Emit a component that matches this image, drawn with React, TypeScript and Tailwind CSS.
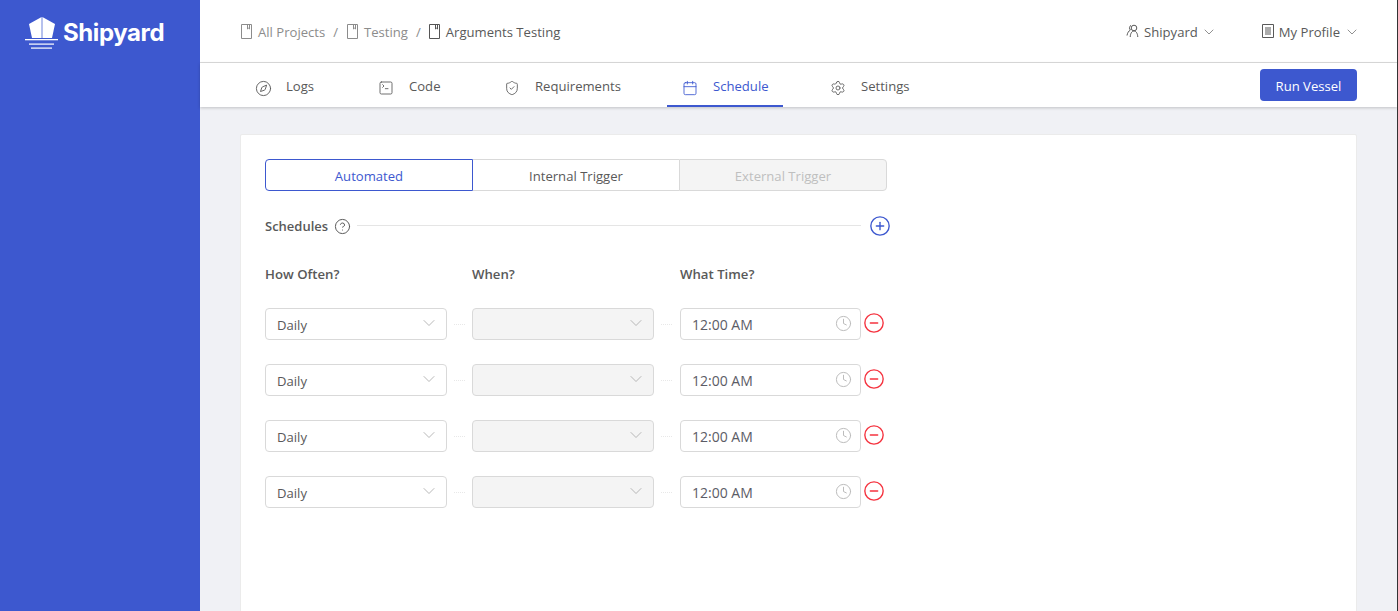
import React from "react";
import { ChevronDown, Compass, SquareTerminal, ShieldCheck, Calendar, Settings, Clock, CirclePlus, CircleMinus, CircleHelp } from "lucide-react";

const font = { fontFamily: '"Open Sans", sans-serif' };

function Doc({ className = "" }: { className?: string }) {
  return (
    <svg width="11" height="15" viewBox="0 0 11 15" fill="none" stroke="currentColor" strokeWidth="1" className={className}>
      <path d="M0.5 0.5h10v14h-10z" />
      <path d="M6.5 0.5v4.5l1-.8 1 .8v-4.5" />
    </svg>
  );
}

function Logo() {
  return (
    <svg width="34" height="34" viewBox="0 0 34 34" fill="white">
      <path d="M16.6 1 L4 8 L7 22 H16.6 Z" />
      <path d="M17.4 1 L30 8 L27 22 H17.4 Z" />
      <rect x="0" y="23" width="33" height="1.3" />
      <rect x="4" y="27.5" width="25" height="1.2" />
      <rect x="6" y="31.5" width="21" height="1.2" />
    </svg>
  );
}

function UserIcon() {
  return (
    <svg width="14" height="14" viewBox="0 0 14 14" fill="none" stroke="currentColor" strokeWidth="1" className="-mt-[3px]">
      <circle cx="8" cy="4" r="2.8" />
      <path d="M4.2 13c.2-3.5 1.6-6 3.8-6s3.6 2.5 3.8 6" />
      <path d="M5 1.4a2.8 2.8 0 0 0-.6 4.6C2.6 7 1.4 9 1 11.5" />
    </svg>
  );
}

function ProfileIcon() {
  return (
    <svg width="12" height="14" viewBox="0 0 12 14" fill="none" stroke="currentColor" strokeWidth="1" className="-mt-[3px]">
      <path d="M.5.5h11v13H.5z" />
      <path d="M3 4h6M3 6h6M3 8h6M3 10h6" />
    </svg>
  );
}

const tabs = [
  { label: "Logs", Icon: Compass, size: 17, w: "w-[91px]" },
  { label: "Code", Icon: SquareTerminal, size: 16, w: "w-[94px]" },
  { label: "Requirements", Icon: ShieldCheck, size: 16, w: "w-[146px]" },
  { label: "Schedule", Icon: Calendar, size: 16, w: "w-[116px]", active: true },
  { label: "Settings", Icon: Settings, size: 16, w: "w-[112px]" },
];

function Row() {
  return (
    <div className="flex items-center h-[32px] mb-[24px] text-[13.1px] text-[#595959]">
      <div className="w-[182px] h-[32px] border border-[#d9d9d9] rounded-[4px] bg-white flex items-center justify-between pl-[11px] pr-[7px]">
        <span className="pt-[3px]">Daily</span>
        <ChevronDown size={20} strokeWidth={1} className="text-[#aaaaaa] -mt-[2px]" />
      </div>
      <div className="w-[11px] border-t border-dotted border-[#e8e8e8] ml-[7px] mr-[7px]" />
      <div className="w-[182px] h-[32px] border border-[#d9d9d9] rounded-[4px] bg-[#f4f4f4] flex items-center justify-end pr-[7px]">
        <ChevronDown size={20} strokeWidth={1} className="text-[#aaaaaa] -mt-[2px]" />
      </div>
      <div className="w-[11px] border-t border-dotted border-[#e8e8e8] ml-[7px] mr-[8px]" />
      <div className="w-[181px] h-[32px] border border-[#d9d9d9] rounded-[4px] bg-white flex items-center justify-between pl-[11px] pr-[8px]">
        <span className="pt-[1px] text-[14px] text-[#5c5c66]">12:00 AM</span>
        <Clock size={17} strokeWidth={1.4} className="text-[#bbbbbb] -mt-[1px]" />
      </div>
      <CircleMinus size={22} strokeWidth={1.5} className="text-[#f5333f] ml-[2px] -mt-[2px]" />
    </div>
  );
}

export default function App() {
  return (
    <div className="flex h-screen overflow-hidden bg-[#f0f1f5] border-r border-[#333]" style={font}>
      <aside className="w-[200px] shrink-0 bg-[#3d58cf]">
        <div className="flex items-start pl-[25px] pt-[16px]">
          <Logo />
          <span className="text-white font-bold text-[24px] leading-[34px] ml-[4px] tracking-[-0.4px]" style={{ fontFamily: 'Inter, "Open Sans", sans-serif' }}>Shipyard</span>
        </div>
      </aside>
      <div className="flex-1 min-w-0 flex flex-col">
        <header className="h-[63px] shrink-0 bg-white border-b border-[#dcdcdc] flex items-center justify-between pl-[41px] pr-[40px] pt-[4px] text-[13.1px]">
          <div className="flex items-center text-[#8c8c8c]">
            <Doc className="mr-[6px] -mt-[3px]" />
            <span>All Projects</span>
            <span className="ml-[8px] mr-[9px]">/</span>
            <Doc className="mr-[6px] -mt-[3px]" />
            <span>Testing</span>
            <span className="mx-[8px]">/</span>
            <Doc className="mr-[6px] -mt-[3px] text-[#555]" />
            <span className="text-[#595959]">Arguments Testing</span>
          </div>
          <div className="flex items-center text-[#595959]">
            <UserIcon />
            <span className="ml-[4px]">Shipyard</span>
            <ChevronDown size={16} strokeWidth={1} className="ml-[3px] -mt-[2px]" />
            <span className="w-[45px]" />
            <ProfileIcon />
            <span className="ml-[5px]">My Profile</span>
            <ChevronDown size={16} strokeWidth={1} className="ml-[4px] -mr-[3px] -mt-[2px]" />
          </div>
        </header>
        <nav className="h-[44px] shrink-0 bg-white shadow-[0_1px_3px_rgba(0,0,0,0.2)] flex items-center justify-between pl-[40px] pr-[40px] text-[13.1px] relative">
          <div className="flex h-full gap-[32px]">
            {tabs.map(({ label, Icon, size, w, active }) => (
              <div key={label} className={`${w} flex items-center gap-[16px] pl-[16px] pt-[6px] border-b-2 whitespace-nowrap ${active ? "border-[#3d58cf] text-[#3d58cf]" : "border-transparent text-[#595959]"}`}>
                <span className="w-[14px] flex justify-center">
                  <Icon size={size} strokeWidth={1.3} className="shrink-0 mt-[2px]" />
                </span>
                <span>{label}</span>
              </div>
            ))}
          </div>
          <button className="w-[97px] h-[32px] rounded-[4px] bg-[#3d58cf] text-white text-[13.1px] pt-[3px]">Run Vessel</button>
        </nav>
        <main className="flex-1 min-h-0 pt-[27px] pl-[40px] pr-[40px]">
          <div className="h-[600px] bg-white border border-[#ebebeb] rounded-[2px] pt-[24px] pl-[24px]">
            <div className="flex w-[622px] h-[32px] text-[13.1px]">
              <div className="w-[208px] border border-[#3d58cf] rounded-l-[4px] text-[#3d58cf] flex items-center justify-center pt-[4px]">Automated</div>
              <div className="w-[206px] border-y border-[#d9d9d9] text-[#595959] flex items-center justify-center pt-[4px]">Internal Trigger</div>
              <div className="w-[208px] border border-[#d9d9d9] rounded-r-[4px] bg-[#f4f4f4] text-[#bfbfbf] flex items-center justify-center pt-[4px]">External Trigger</div>
            </div>
            <div className="flex items-center w-[626px] h-[22px] mt-[24px] text-[13px] font-semibold text-[#595959]">
              <span className="pt-[2px]">Schedules</span>
              <CircleHelp size={17} strokeWidth={1.4} className="ml-[6px] mr-[6px]" />
              <div className="flex-1 border-t border-[#e5e5e5] -mt-[2px]" />
              <CirclePlus size={22} strokeWidth={1.5} className="text-[#3d58cf] ml-[8px]" />
            </div>
            <div className="flex mt-[26px] mb-[23px] h-[22px] items-center text-[13.2px] font-semibold text-[#595959]">
              <span className="w-[207px] pt-[2px]">How Often?</span>
              <span className="w-[208px] pt-[2px]">When?</span>
              <span className="pt-[2px]">What Time?</span>
            </div>
            <Row />
            <Row />
            <Row />
            <Row />
          </div>
        </main>
      </div>
    </div>
  );
}
